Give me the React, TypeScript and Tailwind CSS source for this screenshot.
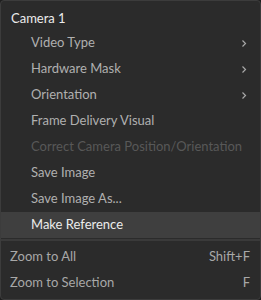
import React from 'react';

const items = [
  { label: 'Video Type', sub: true },
  { label: 'Hardware Mask', sub: true },
  { label: 'Orientation', sub: true },
  { label: 'Frame Delivery Visual' },
  { label: 'Correct Camera Position/Orientation', disabled: true },
  { label: 'Save Image' },
  { label: 'Save Image As...' },
  { label: 'Make Reference', active: true },
];

function Chevron() {
  return (
    <svg width="6" height="9" viewBox="0 0 6 9" className="shrink-0">
      <path d="M1.5 1.5 L4.5 4.5 L1.5 7.5" fill="none" stroke="#a8a8a8" strokeWidth="1.2" />
    </svg>
  );
}

export default function App() {
  return (
    <div className="w-[261px] h-[300px] bg-[#1e1e1e]" style={{ fontFamily: 'Lato, "Open Sans", sans-serif' }}>
      <div className="w-[261px] h-[300px] bg-[#2b2b2b] border border-[#3c3c3c] rounded-[4px] flex flex-col text-[13px]">
        <div className="h-[25px] mt-[4px] pt-[3px] flex items-center pl-[10px] text-[#ececec]">Camera 1</div>
        {items.map((it) => (
          <div
            key={it.label}
            className={`h-[26px] flex items-center pl-[30px] pr-[13px] ${it.active ? 'bg-[#3f3f3f] text-[#ececec]' : it.disabled ? 'text-[#585858]' : 'text-[#b0b0b0]'}`}
          >
            <span className="flex-1 whitespace-nowrap">{it.label}</span>
            {it.sub && <Chevron />}
          </div>
        ))}
        <div className="h-[2px] mt-[1px] bg-[#3a3a3a]" />
        <div className="h-[3px]" />
        <div className="h-[26px] flex items-center justify-between pl-[9px] pr-[10px] text-[#a8a8a8]">
          <span>Zoom to All</span>
          <span>Shift+F</span>
        </div>
        <div className="h-[26px] flex items-center justify-between pl-[9px] pr-[10px] text-[#a8a8a8]">
          <span>Zoom to Selection</span>
          <span>F</span>
        </div>
      </div>
    </div>
  );
}
